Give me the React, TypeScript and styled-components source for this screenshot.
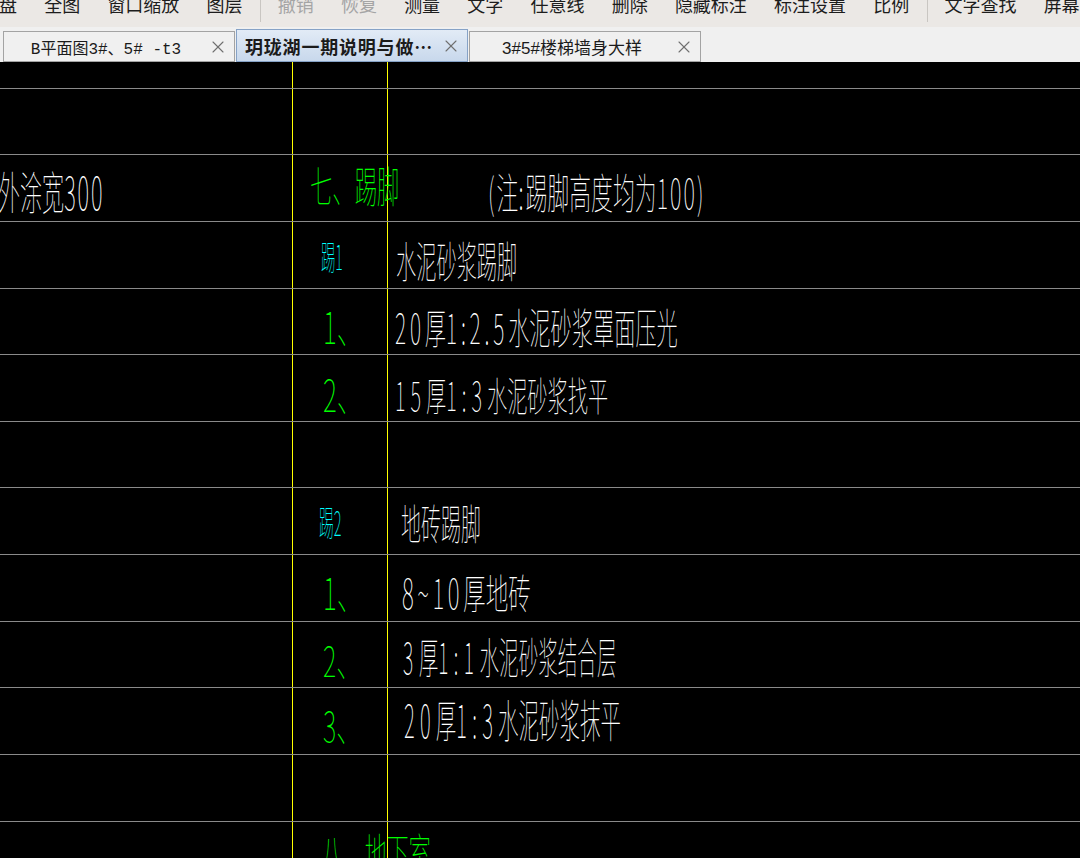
import React from 'react';
import styled, { createGlobalStyle } from 'styled-components';
import { X } from 'lucide-react';

const GlobalStyle = createGlobalStyle`
  html, body {
    margin: 0;
    padding: 0;
    background: #000;
  }
  body {
    font-family: "Noto Sans CJK SC", sans-serif;
  }
`;

const GREEN = '#00ff00';
const CYAN = '#00ffff';
const WHITE = '#ffffff';

const Window = styled.div`
  width: 1080px;
  height: 858px;
  display: flex;
  flex-direction: column;
  overflow: hidden;
`;

const Toolbar = styled.div`
  flex: none;
  height: 27px;
  display: flex;
  align-items: flex-start;
  background: #ebe8e5;
  overflow: hidden;
  white-space: nowrap;
`;

const ToolButton = styled.div<{ $disabled?: boolean; $first?: boolean }>`
  flex: none;
  padding: 0 13.6px;
  padding-left: ${(p) => (p.$first ? '0' : '13.6px')};
  margin-left: ${(p) => (p.$first ? '-1px' : '0')};
  margin-top: -5px;
  font-size: 18px;
  line-height: 18px;
  color: ${(p) => (p.$disabled ? '#a5a5a5' : '#1d1d1d')};
`;

const ToolSeparator = styled.div`
  flex: none;
  width: 1px;
  height: 22px;
  margin: 0 3px 0 4px;
  background: #c9c6c2;
`;

const TabStrip = styled.div`
  flex: none;
  height: 35px;
  display: flex;
  align-items: flex-end;
  gap: 1px;
  padding-left: 3px;
  background: #f0f0f0;
`;

const Tab = styled.div<{ $active?: boolean }>`
  box-sizing: border-box;
  width: 232px;
  height: ${(p) => (p.$active ? 33 : 31)}px;
  display: flex;
  align-items: center;
  padding-right: 6px;
  border: 1px solid ${(p) => (p.$active ? '#86a2c6' : '#a3a3a3')};
  background: ${(p) =>
    p.$active ? 'linear-gradient(#e2ebf6, #c8d8ec)' : '#f0f0f0'};
`;

const TabLabel = styled.span<{ $active?: boolean; $mono?: boolean }>`
  flex: 1;
  text-align: center;
  white-space: nowrap;
  overflow: hidden;
  font-family: ${(p) =>
    p.$mono
      ? '"Liberation Mono", "Noto Sans CJK SC", monospace'
      : p.$active
        ? '"Noto Sans CJK SC", sans-serif'
        : '"Liberation Sans", "Noto Sans CJK SC", sans-serif'};
  font-size: ${(p) => (p.$active ? 18 : p.$mono ? 16 : 17)}px;
  font-weight: ${(p) => (p.$active ? 700 : 400)};
  letter-spacing: ${(p) => (p.$active ? '0.8px' : '0')};
  color: #1b1b1b;
`;

const TabClose = styled.span`
  flex: none;
  display: flex;
  color: #6f6f6f;
`;

const Canvas = styled.div`
  flex: 1;
  display: flex;
  flex-direction: column;
  background: #000;
  overflow: hidden;
`;

const Band = styled.div<{ $h: number }>`
  flex: none;
  box-sizing: border-box;
  height: ${(p) => p.$h}px;
  display: grid;
  grid-template-columns: 292px 95px 1fr;
  border-bottom: 1px solid #8a8a8a;
`;

const Cell = styled.div<{ $rule?: boolean }>`
  display: flex;
  align-items: flex-start;
  min-width: 0;
  border-left: ${(p) => (p.$rule ? '1px solid #ffff00' : 'none')};
`;

const CadText = styled.span<{
  $color: string;
  $size: number;
  $scale: number;
  $x: number;
  $y: number;
}>`
  display: inline-block;
  flex: none;
  margin: ${(p) => p.$y}px 0 0 ${(p) => p.$x}px;
  font-family: "Noto Sans CJK SC", sans-serif;
  font-weight: 100;
  font-size: ${(p) => p.$size}px;
  line-height: 1;
  white-space: nowrap;
  color: ${(p) => p.$color};
  transform: scaleX(${(p) => p.$scale});
  transform-origin: left top;
`;

// digits and punctuation in the CAD font are wider than in Noto
const Num = styled.span<{ $gap: number }>`
  letter-spacing: ${(p) => p.$gap}px;
`;

type Cad = {
  text: string;
  color: string;
  size: number;
  scale: number;
  x: number;
  y: number;
  num?: number;
};
type Row = { h: number; left?: Cad; mid?: Cad; right?: Cad };

const ROW = 200 / 3;

const rows: Row[] = [
  { h: 26.55 },
  { h: ROW },
  {
    h: ROW,
    left: { text: '外涂宽300', color: WHITE, size: 45, scale: 0.49, x: -2, y: 13, num: 4 },
    mid: { text: '七、踢脚', color: GREEN, size: 43, scale: 0.52, x: 17, y: 8 },
    right: { text: '(注:踢脚高度均为100)', color: WHITE, size: 42, scale: 0.52, x: 100, y: 15, num: 4 },
  },
  {
    h: ROW,
    mid: { text: '踢1', color: CYAN, size: 34, scale: 0.42, x: 28, y: 17, num: 3 },
    right: { text: '水泥砂浆踢脚', color: WHITE, size: 43, scale: 0.47, x: 8, y: 16 },
  },
  {
    h: ROW,
    mid: { text: '1、', color: GREEN, size: 44, scale: 0.6, x: 30, y: 14 },
    right: { text: '20厚1:2.5水泥砂浆罩面压光', color: WHITE, size: 42, scale: 0.505, x: 7, y: 16, num: 7.6 },
  },
  {
    h: ROW,
    mid: { text: '2、', color: GREEN, size: 44, scale: 0.6, x: 30, y: 16 },
    right: { text: '15厚1:3水泥砂浆找平', color: WHITE, size: 40, scale: 0.505, x: 7, y: 19, num: 9.9 },
  },
  { h: ROW },
  {
    h: ROW,
    mid: { text: '踢2', color: CYAN, size: 35, scale: 0.42, x: 26, y: 15, num: 3 },
    right: { text: '地砖踢脚', color: WHITE, size: 42, scale: 0.476, x: 13, y: 13 },
  },
  {
    h: ROW,
    mid: { text: '1、', color: GREEN, size: 44, scale: 0.6, x: 30, y: 14 },
    right: { text: '8~10厚地砖', color: WHITE, size: 41, scale: 0.55, x: 14, y: 16, num: 6.4 },
  },
  {
    h: ROW,
    mid: { text: '2、', color: GREEN, size: 42, scale: 0.6, x: 30, y: 16 },
    right: { text: '3厚1:1水泥砂浆结合层', color: WHITE, size: 43, scale: 0.455, x: 15, y: 12, num: 12 },
  },
  {
    h: ROW,
    mid: { text: '3、', color: GREEN, size: 42, scale: 0.6, x: 30, y: 15 },
    right: { text: '20厚1:3水泥砂浆抹平', color: WHITE, size: 45, scale: 0.455, x: 16, y: 8, num: 11.5 },
  },
  { h: ROW },
  {
    h: 40,
    mid: { text: '八、地下室', color: GREEN, size: 43, scale: 0.51, x: 28, y: 8 },
  },
];

const tools: (string | null)[] = [
  '盘', '全图', '窗口缩放', '图层', null, '撤销', '恢复', '测量', '文字', '任意线',
  '删除', '隐藏标注', '标注设置', '比例', null, '文字查找', '屏幕',
];
const disabledTools = ['撤销', '恢复'];

const renderCad = (c?: Cad) => {
  if (!c) return null;
  const parts = c.text.split(/([0-9:.~()]+)/);
  return (
    <CadText $color={c.color} $size={c.size} $scale={c.scale} $x={c.x} $y={c.y}>
      {parts.map((p, i) =>
        i % 2 === 1 && c.num ? (
          <Num key={i} $gap={c.num}>
            {p}
          </Num>
        ) : (
          <React.Fragment key={i}>{p}</React.Fragment>
        )
      )}
    </CadText>
  );
};

const App: React.FC = () => {
  return (
    <Window>
      <GlobalStyle />
      <Toolbar>
        {tools.map((t, i) =>
          t === null ? (
            <ToolSeparator key={i} />
          ) : (
            <ToolButton key={i} $first={i === 0} $disabled={disabledTools.includes(t)}>
              {t}
            </ToolButton>
          )
        )}
      </Toolbar>
      <TabStrip>
        <Tab>
          <TabLabel $mono>B平面图3#、5# -t3</TabLabel>
          <TabClose>
            <X size={20} strokeWidth={1.3} />
          </TabClose>
        </Tab>
        <Tab $active>
          <TabLabel $active>玥珑湖一期说明与做…</TabLabel>
          <TabClose>
            <X size={20} strokeWidth={1.3} />
          </TabClose>
        </Tab>
        <Tab>
          <TabLabel>3#5#楼梯墙身大样</TabLabel>
          <TabClose>
            <X size={20} strokeWidth={1.3} />
          </TabClose>
        </Tab>
      </TabStrip>
      <Canvas>
        {rows.map((r, i) => (
          <Band key={i} $h={r.h}>
            <Cell>{renderCad(r.left)}</Cell>
            <Cell $rule>{renderCad(r.mid)}</Cell>
            <Cell $rule>{renderCad(r.right)}</Cell>
          </Band>
        ))}
      </Canvas>
    </Window>
  );
};

export default App;
